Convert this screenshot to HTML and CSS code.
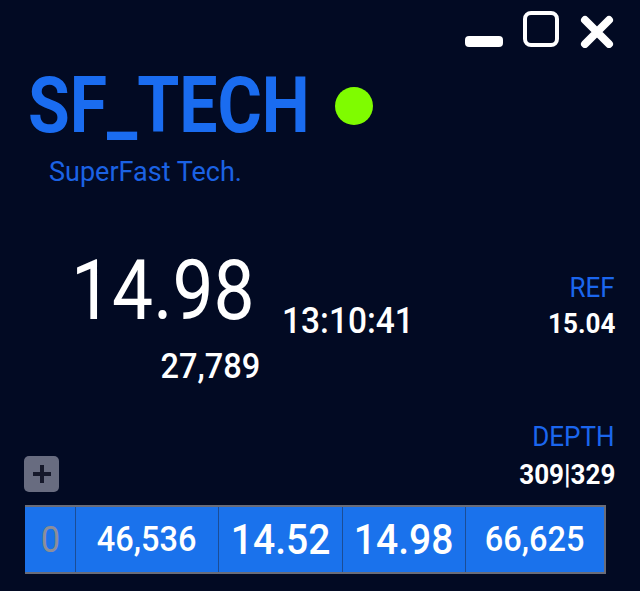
FILE: index.html
```html
<!DOCTYPE html>
<html lang="en">
<head>
  <meta charset="UTF-8">
  <title>SF_TECH</title>
  <link rel="stylesheet" href="styles.css">
</head>
<body>
  <div class="widget">
    <div class="controls">
      <svg class="ctl" width="38" height="37" viewBox="0 0 38 37"><rect x="0" y="25" width="38" height="11" rx="4" fill="#fff"/></svg>
      <svg class="ctl" width="36" height="37" viewBox="0 0 36 37"><rect x="2" y="2" width="32" height="32" rx="6" fill="none" stroke="#fff" stroke-width="4"/></svg>
      <svg class="ctl" width="34" height="37" viewBox="0 0 34 37"><path d="M5 9 L29 33 M29 9 L5 33" stroke="#fff" stroke-width="8" stroke-linecap="round"/></svg>
    </div>

    <div class="head">
      <span class="title narrow tight">SF_TECH</span>
      <span class="dot"></span>
    </div>
    <div class="subtitle">SuperFast Tech.</div>

    <div class="quote">
      <div class="last">
        <div class="price"><span class="narrow tight">14.98</span></div>
        <div class="volume"><span class="narrow-r">27,789</span></div>
      </div>
      <div class="time"><span class="narrow">13:10:41</span></div>
      <div class="ref">
        <div class="label"><span class="narrow-r">REF</span></div>
        <div class="value"><span class="narrow-r">15.04</span></div>
      </div>
    </div>

    <div class="depth-row">
      <button class="add">
        <svg width="20" height="20" viewBox="0 0 20 20"><path d="M10 1 V19 M1 10 H19" stroke="#15182a" stroke-width="4"/></svg>
      </button>
      <div class="depth">
        <div class="label"><span class="narrow-r">DEPTH</span></div>
        <div class="value"><span class="narrow-r">309|329</span></div>
      </div>
    </div>

    <div class="book">
      <div class="cell c-lvl"><span class="narrow-c">0</span></div>
      <div class="cell c-qty"><span class="narrow-c">46,536</span></div>
      <div class="cell c-px"><span class="narrow-c">14.52</span></div>
      <div class="cell c-px"><span class="narrow-c">14.98</span></div>
      <div class="cell c-qty"><span class="narrow-c">66,625</span></div>
    </div>
  </div>
</body>
</html>
```

FILE: styles.css
```css
html, body {
  margin: 0;
  height: 100%;
}
body {
  background: #020a23;
  color: #fff;
  font-family: Roboto, "Liberation Sans", sans-serif;
  overflow: hidden;
}
.widget {
  padding: 11px 25px 0 25px;
}

/* condensed look: Roboto squeezed */
.narrow, .narrow-r, .narrow-c {
  display: inline-block;
  transform: scaleX(.93);
}
.narrow { transform-origin: left center; }
.narrow-r { transform-origin: right center; }
.narrow-c { transform-origin: center; }
.narrow.tight { transform: scaleX(.87); }

.controls {
  display: flex;
  justify-content: flex-end;
  align-items: flex-start;
  gap: 20px;
  height: 37px;
  margin-right: 1px;
}
.controls .ctl:last-child { margin-left: 1px; }

.head {
  display: flex;
  align-items: center;
  margin-top: 19px;
}
.title {
  font-size: 78px;
  font-weight: 700;
  line-height: 1;
  color: #1a6cf0;
  margin-left: 3px;
}
.dot {
  width: 38px;
  height: 38px;
  border-radius: 50%;
  background: #7ffc00;
  margin-left: -17px;
}
.subtitle {
  font-size: 27px;
  line-height: 1;
  color: #1b62e4;
  margin: 14px 0 0 24px;
}

.quote {
  display: flex;
  align-items: flex-start;
  margin-top: 63px;
}
.last {
  display: flex;
  flex-direction: column;
  align-items: flex-end;
  margin-left: 46px;
}
.price {
  font-size: 84px;
  line-height: 1;
}
.volume {
  font-size: 35px;
  font-weight: 500;
  line-height: 1;
  margin-top: 16px;
  margin-right: 22px;
}
.time {
  font-size: 36px;
  font-weight: 500;
  line-height: 1;
  margin: 54px 0 0 0;
}
.ref {
  margin: 25px 0 0 auto;
  text-align: right;
}
.label {
  font-size: 28px;
  line-height: 1;
  color: #1b66ee;
}
.value {
  font-size: 28px;
  font-weight: 700;
  line-height: 1;
}
.ref .value { margin-top: 8px; }

.depth-row {
  display: flex;
  justify-content: space-between;
  align-items: flex-end;
  margin-top: 39px;
}
.add {
  width: 35px;
  height: 36px;
  border: 0;
  padding: 0;
  border-radius: 5px;
  background: #686c80;
  display: flex;
  align-items: center;
  justify-content: center;
  margin-left: -1px;
}
.depth {
  text-align: right;
  padding-bottom: 3px;
}
.depth .value { margin-top: 10px; }

.book {
  display: grid;
  grid-template-columns: 50px 143px 124px 123px 1fr;
  margin: 13px 9px 0 0;
  height: 65px;
  background: #1a72ec;
  border: 2px solid #6a6c78;
  border-left: 0;
}
.cell {
  display: flex;
  align-items: center;
  justify-content: center;
  border-left: 1px solid #1b4d96;
  font-weight: 500;
  line-height: 1;
}
.cell:first-child { border-left: 0; }
.c-lvl {
  font-size: 37px;
  font-weight: 400;
  color: #8c8e98;
}
.c-qty { font-size: 35px; }
.c-px { font-size: 42px; }
```
